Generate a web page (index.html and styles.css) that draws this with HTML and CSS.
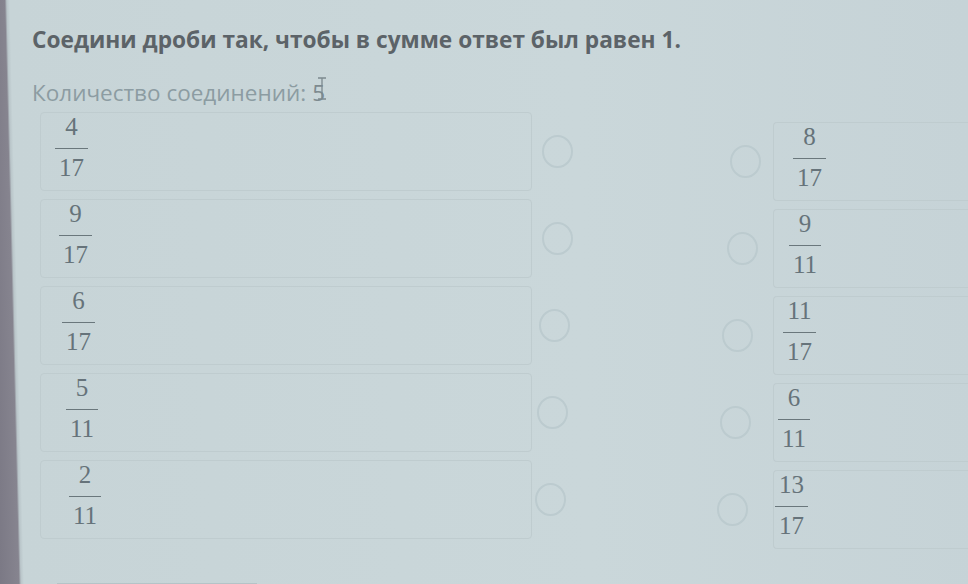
FILE: index.html
```html
<!DOCTYPE html>
<html lang="ru">
<head>
    <meta charset="UTF-8">
    <meta name="viewport" content="width=device-width, initial-scale=1.0">
    <title>Соедини дроби</title>
    <link rel="stylesheet" href="styles.css">
</head>
<body>
    <div class="page">
        <h1 class="title">Соедини дроби так, чтобы в сумме ответ был равен 1.</h1>
        <p class="counter">Количество соединений: <span class="count">5</span><svg class="cursor" width="12" height="24" viewBox="0 0 12 24"><path d="M2 1h8M6 1v21M2 22h8" stroke="#7c898e" stroke-width="1.3" fill="none"/></svg></p>

        <div class="match">
            <!-- левая колонка -->
            <div class="column left">
                <div class="row">
                    <div class="card"><span class="frac"><span class="num">4</span><span class="den">17</span></span></div>
                    <span class="dot"></span>
                </div>
                <div class="row">
                    <div class="card"><span class="frac"><span class="num">9</span><span class="den">17</span></span></div>
                    <span class="dot"></span>
                </div>
                <div class="row">
                    <div class="card"><span class="frac"><span class="num">6</span><span class="den">17</span></span></div>
                    <span class="dot"></span>
                </div>
                <div class="row">
                    <div class="card"><span class="frac"><span class="num">5</span><span class="den">11</span></span></div>
                    <span class="dot"></span>
                </div>
                <div class="row">
                    <div class="card"><span class="frac"><span class="num">2</span><span class="den">11</span></span></div>
                    <span class="dot"></span>
                </div>
            </div>

            <!-- правая колонка -->
            <div class="column right">
                <div class="row">
                    <span class="dot"></span>
                    <div class="card"><span class="frac"><span class="num">8</span><span class="den">17</span></span></div>
                </div>
                <div class="row">
                    <span class="dot"></span>
                    <div class="card"><span class="frac"><span class="num">9</span><span class="den">11</span></span></div>
                </div>
                <div class="row">
                    <span class="dot"></span>
                    <div class="card"><span class="frac"><span class="num">11</span><span class="den">17</span></span></div>
                </div>
                <div class="row">
                    <span class="dot"></span>
                    <div class="card"><span class="frac"><span class="num">6</span><span class="den">11</span></span></div>
                </div>
                <div class="row">
                    <span class="dot"></span>
                    <div class="card"><span class="frac"><span class="num">13</span><span class="den">17</span></span></div>
                </div>
            </div>
        </div>

        <div class="footer">
            <span class="footer-btn"></span>
        </div>
    </div>
</body>
</html>
```

FILE: styles.css
```css
* {
    box-sizing: border-box;
}

body {
    margin: 0;
    padding: 0;
    height: 584px;
    overflow: hidden;
    font-family: 'Open Sans', 'Noto Sans', sans-serif;
    /* край экрана слева, чуть под углом */
    background: linear-gradient(88.6deg, #7b7985 0, #86848f 19px, #b9c5c9 21px, #c7d4d7 24px, #cad7da 60%, #c6d3d7 100%);
}

.page {
    padding: 0 0 0 32px;
}

.title {
    margin: 0;
    padding-top: 25px;
    font-size: 22.7px;
    font-weight: 700;
    line-height: 30px;
    color: #5c6368;
}

.counter {
    margin: 0;
    padding-top: 23px;
    font-size: 22.5px;
    line-height: 30px;
    color: #8c9ca2;
    display: flex;
    align-items: center;
}

.count {
    margin-left: 6px;
    color: #7d8a8f;
}

.cursor {
    margin-left: -9px;
    margin-top: -8px;
}

.match {
    display: flex;
    justify-content: space-between;
}

.column {
    display: flex;
    flex-direction: column;
}

.column.left {
    padding-left: 8px;
}

.column.right {
    width: 238px;
    padding-top: 10px;
}

.row {
    display: flex;
    align-items: center;
    height: 87px;
}

.card {
    display: flex;
    align-items: center;
    height: 79px;
    border: 1px solid #bfcccf;
    border-radius: 4px;
}

.left .card {
    width: 492px;
    padding-left: 14px;
    margin-right: 10px;
}

.right .card {
    flex: 1;
    padding-left: 19px;
    border-right: none;
    border-radius: 4px 0 0 4px;
    margin-left: 12px;
}

/* снимок экрана немного под углом: ряды слегка смещаются */
.left .row:nth-child(2) .card { padding-left: 18px; }
.left .row:nth-child(3) .card { padding-left: 21px; margin-right: 7px; }
.left .row:nth-child(4) .card { padding-left: 25px; margin-right: 5px; }
.left .row:nth-child(5) .card { padding-left: 28px; margin-right: 3px; }

.right .row:nth-child(2) .card { padding-left: 15px; }
.right .row:nth-child(3) .card { padding-left: 9px; }
.right .row:nth-child(4) .card { padding-left: 4px; }
.right .row:nth-child(5) .card { padding-left: 1px; }

.right .row:nth-child(2) .dot { margin-left: -3px; margin-right: 3px; }
.right .row:nth-child(3) .dot { margin-left: -8px; margin-right: 8px; }
.right .row:nth-child(4) .dot { margin-left: -10px; margin-right: 10px; }
.right .row:nth-child(5) .dot { margin-left: -13px; margin-right: 13px; }

.dot {
    width: 31px;
    height: 33px;
    border: 2px solid #bccbcf;
    border-radius: 50%;
    flex: none;
}

.frac {
    display: inline-flex;
    flex-direction: column;
    align-items: center;
    font-family: 'Liberation Serif', 'DejaVu Serif', serif;
    font-size: 25px;
    line-height: 22px;
    color: #66737a;
    margin-bottom: 8px;
}

.frac .num {
    padding: 0 4px 10px;
}

.frac .den {
    padding: 8px 4px 0;
    border-top: 1.5px solid #6a777c;
}

.footer {
    padding: 30px 0 0 25px;
}

.footer-btn {
    display: block;
    width: 200px;
    height: 20px;
    border-top: 1px solid #b5c3c7;
}
```
